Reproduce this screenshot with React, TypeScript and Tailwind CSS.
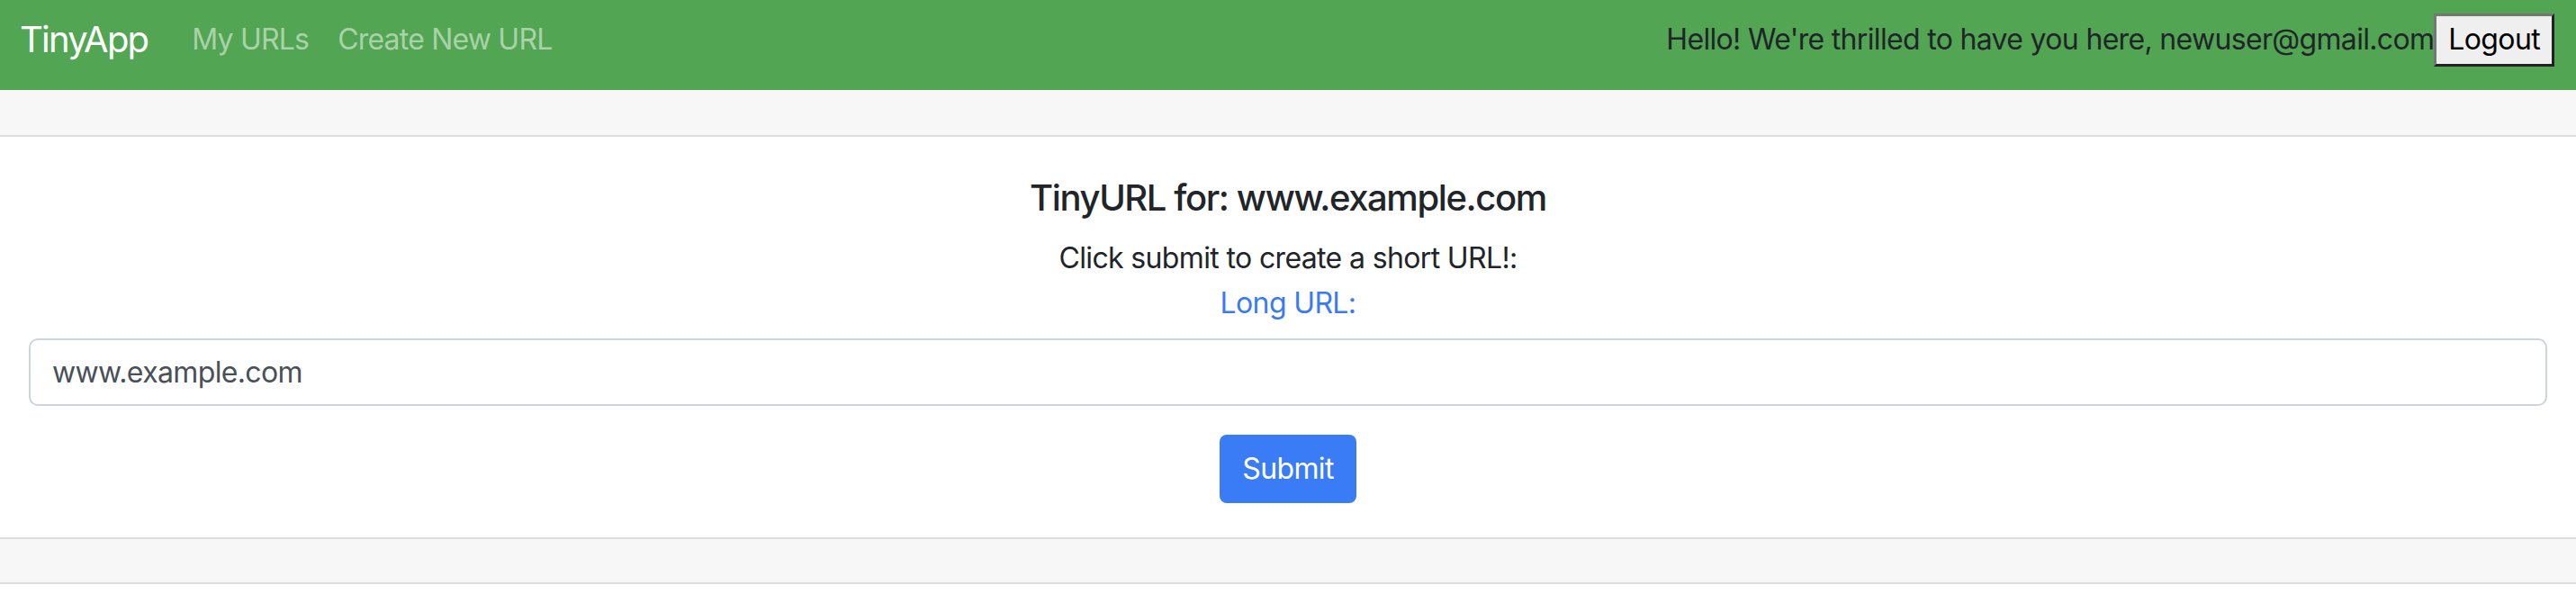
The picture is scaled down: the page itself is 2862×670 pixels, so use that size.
export default function App() {
  return (
    <div className="min-h-[670px] bg-white font-['Inter',sans-serif] text-[#212529]">
      <nav className="h-[100px] bg-[#52a552] flex items-center pb-[12px] pl-[22px] pr-[24px]">
        <span className="text-[40px] leading-[1.5] tracking-[-0.045em] text-white">TinyApp</span>
        <a className="ml-[49px] text-[32px] leading-[1.5] tracking-[-0.025em] text-[#a9d2a9]">My URLs</a>
        <a className="ml-[32px] text-[32px] leading-[1.5] tracking-[-0.025em] text-[#a9d2a9]">Create New URL</a>
        <div className="ml-auto flex items-center">
          <span className="text-[32px] leading-[1.5] tracking-[-0.021em] text-[#212529]">
            Hello! We're thrilled to have you here, newuser@gmail.com
          </span>
          <button className="h-[59px] px-[13px] bg-[#efefef] border-[3px] border-t-[#767676] border-l-[#767676] border-b-[#222222] border-r-[#222222] text-[32px] leading-none tracking-[-0.02em] text-black">
            Logout
          </button>
        </div>
      </nav>
      <div className="h-[52px] bg-[#f7f7f7] border-b-2 border-[#dcdcdc]" />
      <div className="px-[32px] pt-[32px] pb-[38px] flex flex-col items-center">
        <h5 className="text-[40px] font-medium leading-[1.2] tracking-[-0.035em] mt-[12px]">TinyURL for: www.example.com</h5>
        <p className="text-[32px] leading-[1.5] tracking-[-0.02em] mt-[19px]">Click submit to create a short URL!:</p>
        <label className="text-[32px] leading-[1.5] tracking-[-0.02em] mt-[2px] text-[#3a7bf2]">Long URL:</label>
        <input
          readOnly
          value="www.example.com"
          className="mt-[15px] w-full h-[75px] px-[24px] border-2 border-[#ced4da] rounded-[10px] text-[32px] tracking-[-0.02em] text-[#495057] outline-none"
        />
        <button className="mt-[32px] h-[76px] px-[25px] bg-[#3a7cf6] rounded-[8px] text-[32px] tracking-[-0.02em] text-white">
          Submit
        </button>
      </div>
      <div className="h-[52px] bg-[#f7f7f7] border-y-2 border-[#dcdcdc]" />
    </div>
  );
}
